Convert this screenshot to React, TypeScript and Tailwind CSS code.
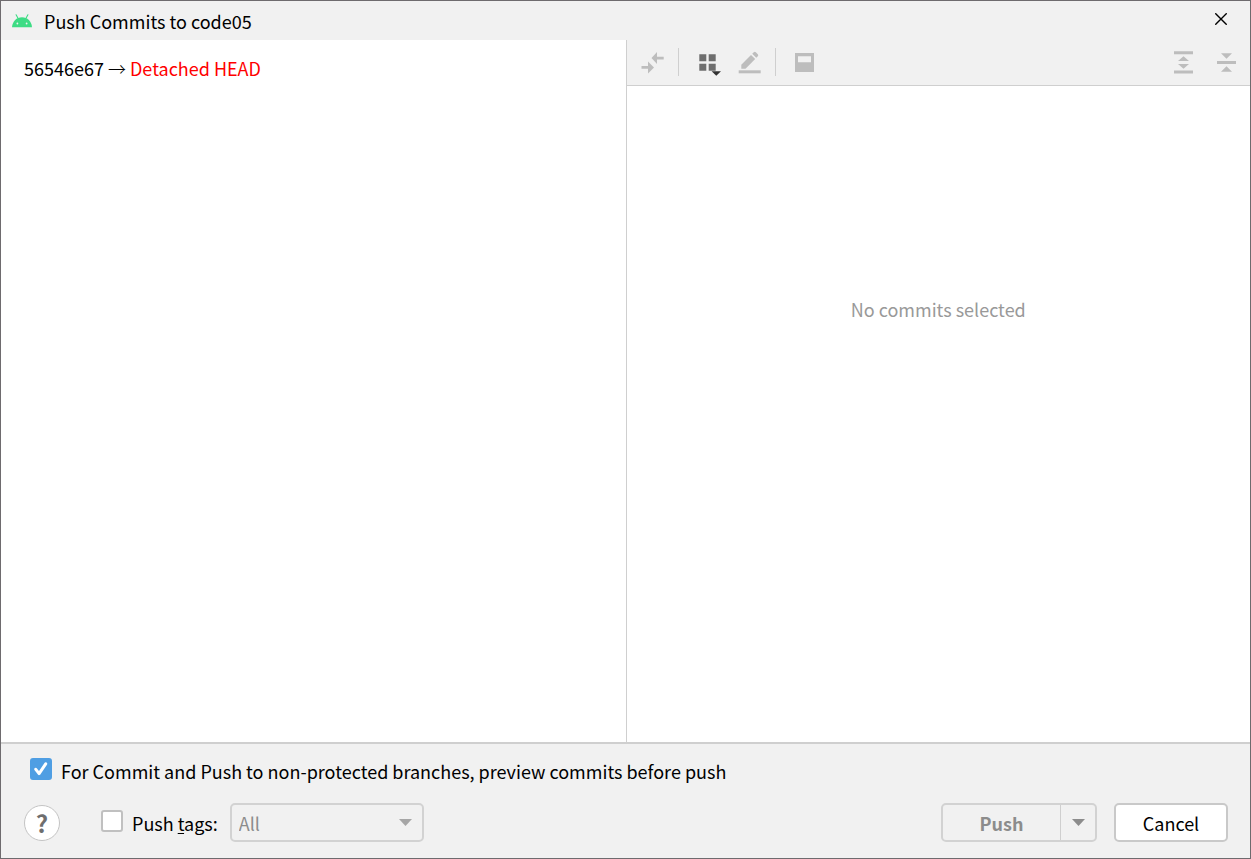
import { useState } from "react";
import type { ReactNode } from "react";

interface ToolbarButtonProps {
  label: string;
  disabled?: boolean;
  children: ReactNode;
}

function ToolbarButton({ label, disabled, children }: ToolbarButtonProps) {
  return (
    <button
      type="button"
      aria-label={label}
      disabled={disabled}
      className="size-6 shrink-0 text-[#bdbdbd]"
    >
      <svg viewBox="0 -1 24 24" fill="currentColor" className="size-6 overflow-visible">
        {children}
      </svg>
    </button>
  );
}

function Separator() {
  return <div className="ml-[13px] mr-[17px] h-7 w-px bg-[#cfcfcf]" />;
}

interface CheckboxProps {
  checked: boolean;
  onChange: (checked: boolean) => void;
  children: ReactNode;
}

function Checkbox({ checked, onChange, children }: CheckboxProps) {
  return (
    <label className="flex items-center gap-[9px]">
      <span className="mb-1 grid size-[22px] shrink-0">
        <input
          type="checkbox"
          checked={checked}
          onChange={(e) => onChange(e.target.checked)}
          className="col-start-1 row-start-1 size-[22px] appearance-none rounded-[3px] border-2 border-[#c0c0c0] bg-white checked:border-[#4f9ee3] checked:bg-[#4f9ee3]"
        />
        {checked && (
          <svg
            viewBox="0 0 22 22"
            fill="none"
            stroke="white"
            strokeWidth="3"
            strokeLinecap="round"
            className="pointer-events-none col-start-1 row-start-1 size-[22px]"
          >
            <path d="M5.8 11.3 9.1 15.6 15.7 5.8" strokeLinejoin="round" />
          </svg>
        )}
      </span>
      <span>{children}</span>
    </label>
  );
}

function TitleBar() {
  return (
    <header className="flex h-[39px] items-center pl-[11px] pr-[23px]">
      <svg viewBox="0 0 20 14" className="w-5 shrink-0">
        <path
          d="M4.1 0.8 6 4.2M15.9 0.8 14 4.2"
          stroke="#3ddc84"
          strokeWidth="1.1"
          strokeLinecap="round"
        />
        <path d="M0 13.2C0.4 7.2 4.6 3.2 10 3.2s9.6 4 10 10z" fill="#3ddc84" />
        <circle cx="5.4" cy="9.5" r="0.9" fill="#f1f1f1" />
        <circle cx="14.6" cy="9.5" r="0.9" fill="#f1f1f1" />
      </svg>
      <h1 className="ml-3">Push Commits to code05</h1>
      <button type="button" aria-label="Close" className="mb-1 ml-auto">
        <svg viewBox="0 0 12 12" stroke="black" strokeWidth="1.4" className="size-3">
          <path d="M0.3 0.3 11.7 11.7M11.7 0.3 0.3 11.7" />
        </svg>
      </button>
    </header>
  );
}

function Toolbar() {
  return (
    <div className="flex h-[46px] items-center border-b border-[#cfcfcf] bg-[#f1f1f1] pb-px pl-3.5 pr-[11px]">
      <ToolbarButton label="Show Diff" disabled>
        <path d="M10.5 7 16 1v4.7h6.7v2.8H16V13z" />
        <path d="M13 16.5 7 10.5v4.4H0.5v2.9H7v4.7z" />
      </ToolbarButton>
      <Separator />
      <ToolbarButton label="Group By">
        <path
          d="M3.3 3.3h7v7h-7zM12.7 3.3h7v7h-7zM3.3 12.8h7v7h-7zM12.7 12.8h7v7h-7z"
          fill="#6e6e6e"
        />
        <path d="M15.6 20.3h9.4l-4.7 4.4z" fill="#333333" />
      </ToolbarButton>
      <div className="ml-[18px] flex">
        <ToolbarButton label="Edit Source" disabled>
          <path d="M0.7 19.3h22v3h-22z" />
          <path d="M3.3 17.7v-4L13 4l4.2 4-9.7 9.7z" />
          <path d="m14.2 2.8 1.6-1.6q1-.8 2 0l2 2q1 1 0 2l-1.5 1.6z" />
        </ToolbarButton>
      </div>
      <Separator />
      <ToolbarButton label="Show Diff Preview" disabled>
        <path d="M2 2h19v19H2zM5 5.3v6h13v-6z" fillRule="evenodd" />
      </ToolbarButton>
      <div className="ml-auto flex gap-[19px]">
        <ToolbarButton label="Expand All" disabled>
          <path d="M2 .3h19v3H2zM2 19.4h19v3H2zM6 10l5.5-4.8L17 10zM6 13h11l-5.5 4.8z" />
        </ToolbarButton>
        <ToolbarButton label="Collapse All" disabled>
          <path d="M2 10h19v3H2zM6 2.2h11l-5.5 5.6zM6 20.8l5.5-5.6 5.5 5.6z" />
        </ToolbarButton>
      </div>
    </div>
  );
}

export default function App() {
  const [preview, setPreview] = useState(true);
  const [pushTags, setPushTags] = useState(false);
  const [tags, setTags] = useState("All");

  return (
    <div className="flex min-h-screen flex-col border border-[#6e6b6e] bg-[#f1f1f1] font-['Noto_Sans_CJK_SC',sans-serif] text-[18px] leading-7 text-black">
      <TitleBar />

      <main className="flex flex-1 bg-white">
        <section className="w-1/2 px-[23px] pt-3.5">
          <p>
            56546e67 <span className="font-light">→</span>{" "}
            <span className="text-[#ff0000]">Detached HEAD</span>
          </p>
        </section>
        <section className="w-1/2 border-l border-[#cfcfcf]">
          <Toolbar />
          <p className="pt-[209px] text-center text-[#999999]">No commits selected</p>
        </section>
      </main>

      <footer className="border-t-2 border-[#cfcfcf] pb-4 pl-[23px] pr-[22px] pt-[13px]">
        <div className="flex pl-1.5">
          <Checkbox checked={preview} onChange={setPreview}>
            For Commit and Push to non-protected branches, preview commits before push
          </Checkbox>
        </div>

        <div className="mt-[18px] flex items-center">
          <button
            type="button"
            aria-label="Help"
            className="mr-[41px] flex size-9 shrink-0 items-center justify-center rounded-full border border-[#c4c4c4] bg-white text-2xl font-bold text-[#6e6e6e]"
          >
            ?
          </button>
          <Checkbox checked={pushTags} onChange={setPushTags}>
            Push <span className="underline underline-offset-2">t</span>ags:
          </Checkbox>
          <div className="ml-3 grid w-[194px] items-center">
            <select
              aria-label="Tags to push"
              value={tags}
              onChange={(e) => setTags(e.target.value)}
              disabled={!pushTags}
              className="col-start-1 row-start-1 h-[39px] appearance-none rounded-[5px] border-2 border-[#d2d2d2] bg-[#f1f1f1] px-[7px] text-[#8c8c8c] opacity-100"
            >
              <option>All</option>
              <option>Current Branch</option>
            </select>
            <svg
              viewBox="0 0 13 7"
              fill="#a6a6a6"
              className="pointer-events-none col-start-1 row-start-1 mr-3 w-[13px] justify-self-end"
            >
              <path d="M0 0h13L6.5 7z" />
            </svg>
          </div>

          <div className="ml-auto flex h-[39px] w-[156px] rounded-[5px] border-2 border-[#d2d2d2]">
            <button type="button" disabled className="flex-1 font-bold text-[#8c8c8c]">
              Push
            </button>
            <button
              type="button"
              aria-label="More push options"
              disabled
              className="flex w-[35px] items-center justify-center border-l border-[#cfcfcf]"
            >
              <svg viewBox="0 0 13 7" fill="#8c8c8c" className="w-[13px]">
                <path d="M0 0h13L6.5 7z" />
              </svg>
            </button>
          </div>
          <button
            type="button"
            className="ml-[17px] h-[39px] w-[114px] rounded-[5px] border-2 border-[#c9c9c9] bg-white"
          >
            Cancel
          </button>
        </div>
      </footer>
    </div>
  );
}
